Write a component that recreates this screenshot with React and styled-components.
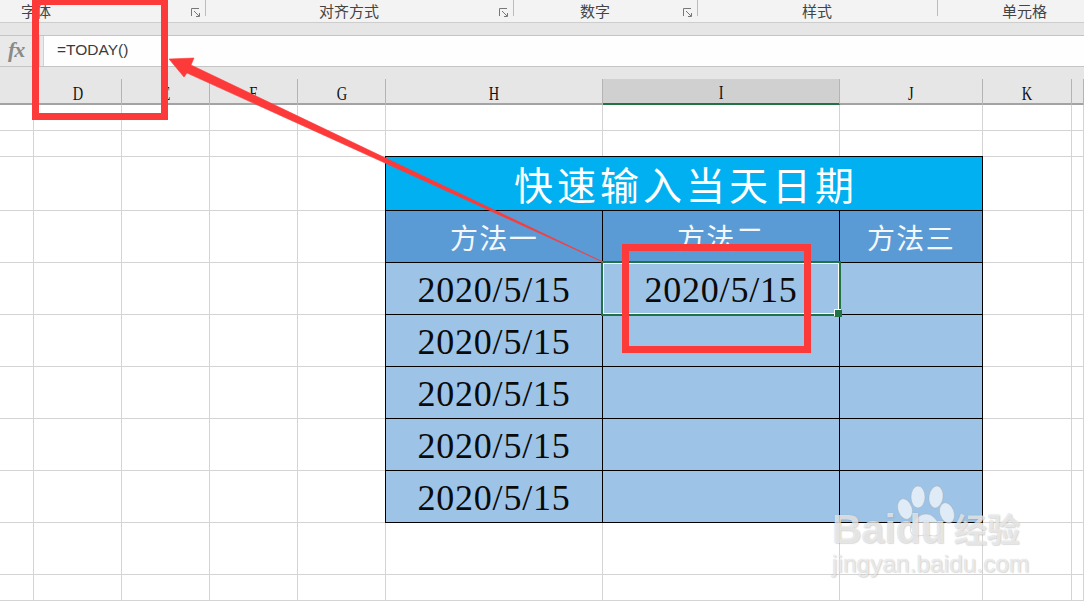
import React from "react";
import styled, { createGlobalStyle } from "styled-components";

const Global = createGlobalStyle`
  html, body { margin: 0; padding: 0; background: #fff; }
  * { box-sizing: border-box; }
`;

const Page = styled.div`
  position: relative;
  width: 1084px;
  height: 601px;
  overflow: hidden;
  background: #fff;
  display: flex;
  flex-direction: column;
  font-family: "Liberation Sans", "Noto Sans CJK SC", sans-serif;
`;

const Ribbon = styled.div`
  display: flex;
  height: 23px;
  background: #f3f3f3;
  border-bottom: 1px solid #cdcdcd;
`;

const RibbonGroup = styled.div`
  position: relative;
  width: ${(p) => p.$w}px;
  height: 16px;
  padding-left: ${(p) => p.$pad}px;
  padding-top: 2px;
  border-right: ${(p) => (p.$last ? "none" : "1px solid #bdbdbd")};
  font: 15px/17px "Noto Sans CJK SC", sans-serif;
  color: #444;
  white-space: nowrap;
`;

const Launcher = styled.svg`
  position: absolute;
  right: 4px;
  top: 8px;
  width: 10px;
  height: 10px;
`;

const Strip = styled.div`
  height: 13px;
  background: #e6e6e6;
  border-bottom: 1px solid #c4c4c4;
`;

const FormulaBar = styled.div`
  display: flex;
  height: 31px;
  background: #e9e9e9;
  border-bottom: 1px solid #c4c4c4;
`;

const FxBox = styled.div`
  width: 40px;
  border-right: 1px solid #d2d2d2;
  font: italic bold 22px/28px "Liberation Serif", serif;
  color: #8a8a8a;
  padding-left: 8px;
  letter-spacing: -1px;
`;

const FormulaInput = styled.div`
  flex: 1;
  margin-left: 3px;
  background: #fefefe;
  border-left: 1px solid #d2d2d2;
  padding-left: 13px;
  font: 15.5px/28px "Liberation Sans", sans-serif;
  color: #3b3b3b;
`;

const cols = "34px 88px 88px 88px 88px 217px 237px 143px 89px 12px";

const HeaderBand = styled.div`
  height: 38px;
  padding-top: 12px;
  background: #e6e6e6;
  border-bottom: 2px solid #a3a3a3;
`;

const HeaderCols = styled.div`
  display: grid;
  grid-template-columns: ${cols};
  height: 24px;
`;

const ColHead = styled.div`
  display: flex;
  align-items: center;
  justify-content: center;
  height: 26px;
  padding-top: 3px;
  border-right: 1px solid #b4b4b4;
  color: #111;
  background: ${(p) => (p.$active ? "#d0d0d0" : "transparent")};
  border-bottom: ${(p) => (p.$active ? "2px solid #217346" : "none")};
`;

const ColLabel = styled.span`
  display: inline-block;
  font: 19px/20px "Liberation Serif", serif;
  transform: scaleX(0.76);
`;

const Sheet = styled.div`
  display: grid;
  grid-template-columns: ${cols};
  grid-template-rows: 26px 26px 54px 52px 52px 52px 52px 52px 52px 52px 26px;
  flex: 1;
`;

const Cell = styled.div`
  border-right: 1px solid #d4d4d4;
  border-bottom: 1px solid #d4d4d4;
`;

const TableCell = styled.div`
  position: relative;
  display: flex;
  align-items: center;
  justify-content: center;
  border-right: 1px solid #000;
  border-bottom: 1px solid #000;
  box-shadow: -1px 0 0 #000, 0 -1px 0 #000, -1px -1px 0 #000;
`;

const TitleCell = styled(TableCell)`
  grid-column: 6 / span 3;
  background: #00b0f0;
  color: #fff;
  font: 39px/50px "Noto Sans CJK SC", sans-serif;
  letter-spacing: 4px;
  padding-left: 4px;
  padding-bottom: 2px;
`;

const HeadCell = styled(TableCell)`
  background: #5b9bd5;
  color: #f4f8fc;
  font: 28px/50px "Noto Sans CJK SC", sans-serif;
  letter-spacing: 1.4px;
`;

const DataCell = styled(TableCell)`
  background: #9dc3e6;
  color: #0a0a0a;
  font: 36px/50px "Liberation Serif", serif;
  letter-spacing: 0.8px;
  padding-top: 2px;
`;

const Selection = styled.div`
  position: absolute;
  z-index: 2;
  left: -2px;
  top: -2px;
  right: -2px;
  bottom: -2px;
  border: 2px solid #217346;
  box-shadow: inset 0 0 0 1px #fff;
  &::after {
    content: "";
    position: absolute;
    right: -3px;
    bottom: -3px;
    width: 6px;
    height: 6px;
    background: #217346;
    border: 1px solid #fff;
    border-right-color: #217346;
    border-bottom-color: #217346;
  }
`;

const FormulaCallout = styled.div`
  position: absolute;
  z-index: 3;
  left: 32px;
  top: -2px;
  width: 136px;
  height: 122px;
  border: 7px solid #fd3a3a;
`;

const CellCallout = styled.div`
  position: absolute;
  z-index: 3;
  left: 622px;
  top: 244px;
  width: 189px;
  height: 109px;
  border: 7px solid #fd3a3a;
`;

const ArrowLayer = styled.svg`
  position: absolute;
  z-index: 3;
  left: 0;
  top: 0;
  width: 1084px;
  height: 601px;
  pointer-events: none;
`;

const Watermark = styled.div`
  position: absolute;
  z-index: 3;
  left: 830px;
  top: 482px;
  width: 200px;
  height: 100px;
  color: rgba(255, 255, 255, 0.68);
  text-shadow: 0 0 1px rgba(110, 110, 110, 0.4), 1px 1px 1px rgba(140, 140, 140, 0.25);
`;

const Paw = styled.svg`
  position: absolute;
  left: 64px;
  top: 0;
  width: 70px;
  height: 60px;
`;

const Brand = styled.div`
  position: absolute;
  left: 2px;
  top: 24px;
  font: bold 41px/46px "Liberation Sans", sans-serif;
  white-space: nowrap;
`;

const BrandCn = styled.div`
  position: absolute;
  left: 124px;
  top: 25px;
  font: bold 33px/42px "Noto Sans CJK SC", sans-serif;
  white-space: nowrap;
`;

const Site = styled.div`
  position: absolute;
  left: 2px;
  top: 67px;
  font: 24.5px/30px "Liberation Sans", sans-serif;
  white-space: nowrap;
`;

const headers = ["", "D", "E", "F", "G", "H", "I", "J", "K", ""];
const rowsBefore = 2;

function LauncherIcon() {
  return (
    <Launcher viewBox="0 0 10 10" fill="none" stroke="#777" strokeWidth="1">
      <path d="M0.5 8V0.5H8" />
      <path d="M3 3l5 5M8.5 5v3.5H5" />
    </Launcher>
  );
}

function plainCells(n, key) {
  return Array.from({ length: n }, (_, i) => <Cell key={`${key}-${i}`} />);
}

export default function App() {
  const dataRows = [0, 1, 2, 3, 4];
  return (
    <Page>
      <Global />
      <Ribbon>
        <RibbonGroup $w={206} $pad={21}>
          字体
          <LauncherIcon />
        </RibbonGroup>
        <RibbonGroup $w={308} $pad={113}>
          对齐方式
          <LauncherIcon />
        </RibbonGroup>
        <RibbonGroup $w={184} $pad={66}>
          数字
          <LauncherIcon />
        </RibbonGroup>
        <RibbonGroup $w={240} $pad={104}>样式</RibbonGroup>
        <RibbonGroup $w={146} $pad={64} $last>单元格</RibbonGroup>
      </Ribbon>
      <Strip />
      <FormulaBar>
        <FxBox>fx</FxBox>
        <FormulaInput>=TODAY()</FormulaInput>
      </FormulaBar>
      <HeaderBand>
        <HeaderCols>
          {headers.map((h, i) => (
            <ColHead key={i} $active={h === "I"}>
              <ColLabel>{h}</ColLabel>
            </ColHead>
          ))}
        </HeaderCols>
      </HeaderBand>
      <Sheet>
        {plainCells(10 * rowsBefore, "top")}
        {plainCells(5, "title-l")}
        <TitleCell>快速输入当天日期</TitleCell>
        {plainCells(2, "title-r")}
        {plainCells(5, "head-l")}
        <HeadCell>方法一</HeadCell>
        <HeadCell>方法二</HeadCell>
        <HeadCell>方法三</HeadCell>
        {plainCells(2, "head-r")}
        {dataRows.map((r) => (
          <React.Fragment key={r}>
            {plainCells(5, `d${r}-l`)}
            <DataCell>2020/5/15</DataCell>
            <DataCell>
              {r === 0 ? "2020/5/15" : ""}
              {r === 0 ? <Selection /> : null}
            </DataCell>
            <DataCell />
            {plainCells(2, `d${r}-r`)}
          </React.Fragment>
        ))}
        {plainCells(20, "bottom")}
      </Sheet>

      <Watermark>
        <Paw viewBox="0 0 70 60">
          <g fill="rgba(255,255,255,0.68)" stroke="rgba(170,170,170,0.4)" strokeWidth="1">
            <ellipse cx="11" cy="27" rx="7" ry="10.5" transform="rotate(-18 11 27)" />
            <ellipse cx="24" cy="15" rx="7" ry="11" />
            <ellipse cx="42" cy="15" rx="7" ry="11" transform="rotate(8 42 15)" />
            <ellipse cx="53" cy="31" rx="7" ry="10.5" transform="rotate(-18 53 31)" />
            <path d="M32 32c6 0 10 5 13 10s2 12-5 12c-3 0-5-1-8-1s-6 1-9 1c-7 0-8-7-5-12s8-10 14-10z" />
          </g>
        </Paw>
        <Brand>Baidu</Brand>
        <BrandCn>经验</BrandCn>
        <Site>jingyan.baidu.com</Site>
      </Watermark>

      <FormulaCallout />
      <CellCallout />
      <ArrowLayer viewBox="0 0 1084 601">
        <polygon
          fill="#fd3a3a"
          stroke="#fd3a3a"
          strokeWidth="0.6"
          points="169,59 194,58 191,65 603,262 187,73 184,77"
        />
      </ArrowLayer>
    </Page>
  );
}
